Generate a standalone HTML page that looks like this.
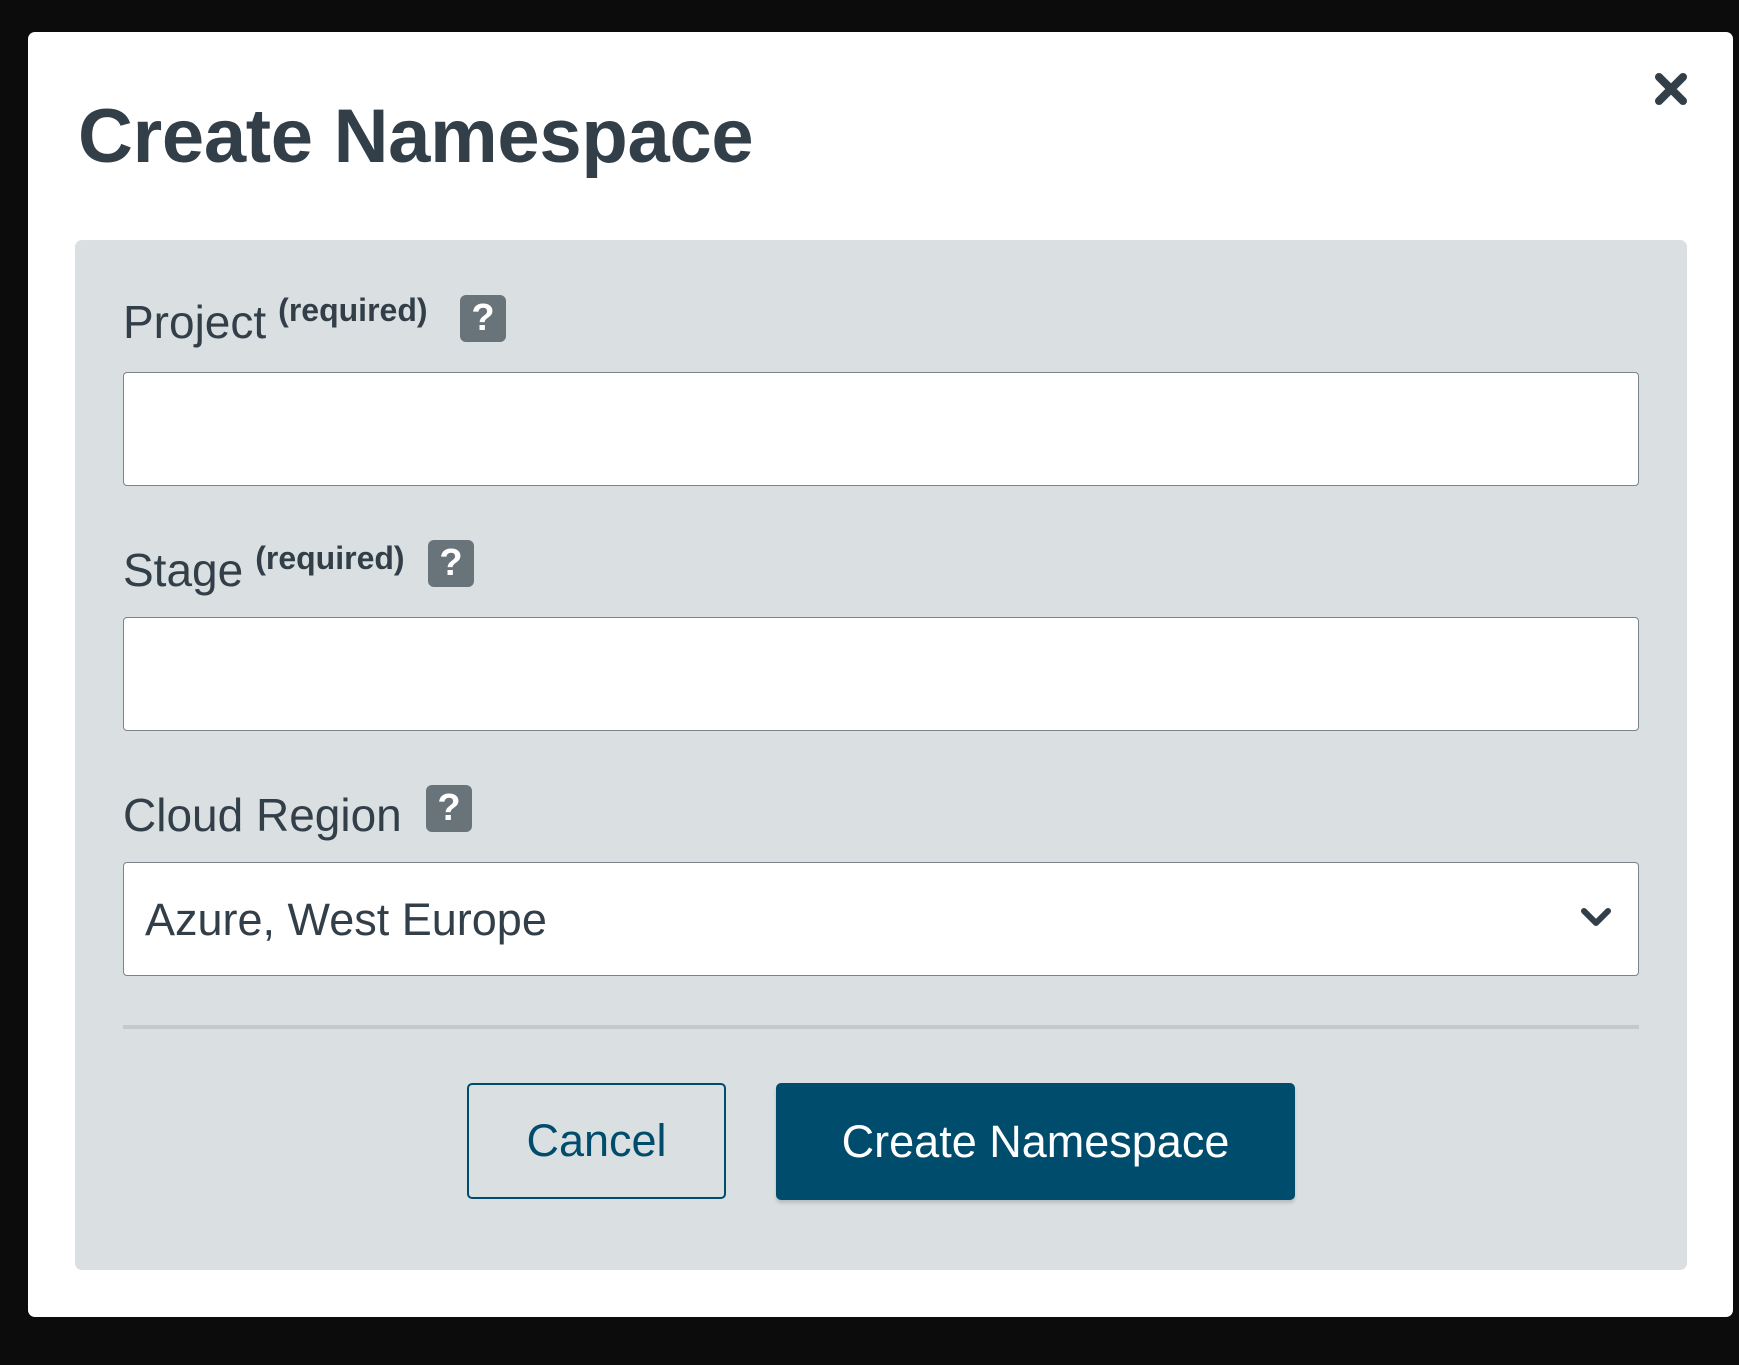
<!DOCTYPE html>
<html><head><meta charset="utf-8"><style>
*{box-sizing:border-box;margin:0;padding:0}
body{width:1739px;height:1365px;background:#0c0c0c;position:relative;overflow:hidden;font-family:"Liberation Sans",sans-serif;color:#333f48}
.modal{position:absolute;left:28px;top:32px;width:1705px;height:1285px;background:#fff;border-radius:7px}
.abs{position:absolute}
h1{position:absolute;left:50px;top:67px;font-size:76px;font-weight:bold;line-height:1;color:#333f48;letter-spacing:-0.3px}
.panel{position:absolute;left:47px;top:208px;width:1612px;height:1030px;background:#dadfe2;border-radius:7px}
.lbl{position:absolute;font-size:46px;line-height:1;white-space:nowrap}
.lbl sup{font-size:32px;font-weight:bold;vertical-align:0;position:relative;top:-17px;margin-left:12px}
.q{position:absolute;width:46px;height:47px;background:#68737a;border-radius:6px;color:#fff;font-weight:bold;font-size:38px;line-height:47px;text-align:center}
.inp{position:absolute;left:48px;width:1516px;height:114px;background:#fff;border:1.5px solid #7b848a;border-radius:4px}
</style></head><body>
<div class="modal">
<h1>Create Namespace</h1>
<svg class="abs" style="left:1626px;top:40px" width="34" height="34" viewBox="0 0 34 34"><path d="M5 5L29 29M29 5L5 29" stroke="#333f48" stroke-width="8" stroke-linecap="round"/></svg>
<div class="panel">
<div class="lbl" style="left:48px;top:59px">Project<sup>(required)</sup></div>
<div class="q" style="left:385px;top:55px">?</div>
<div class="inp" style="top:132px"></div>
<div class="lbl" style="left:48px;top:307px">Stage<sup>(required)</sup></div>
<div class="q" style="left:353px;top:300px">?</div>
<div class="inp" style="top:377px"></div>
<div class="lbl" style="left:48px;top:552px">Cloud Region</div>
<div class="q" style="left:351px;top:545px">?</div>
<div class="inp" style="top:622px"><div class="abs" style="left:21px;top:34px;font-size:45px;color:#333f48;line-height:1">Azure, West Europe</div>
<svg class="abs" style="left:1456px;top:44px" width="32" height="22" viewBox="0 0 32 22"><path d="M4 4L16 16L28 4" fill="none" stroke="#333f48" stroke-width="6" stroke-linecap="round" stroke-linejoin="round"/></svg></div>
<div class="abs" style="left:48px;top:785px;width:1516px;height:4px;background:#c4c9cc"></div>
<div class="abs" style="left:392px;top:843px;width:259px;height:116px;border:2px solid #004c6d;border-radius:5px;color:#004c6d;font-size:45px;text-align:center;line-height:112px">Cancel</div>
<div class="abs" style="left:701px;top:843px;width:519px;height:117px;background:#004c6d;border-radius:5px;color:#fff;font-size:45px;text-align:center;line-height:117px;box-shadow:0 3px 3px rgba(0,0,0,.15)">Create Namespace</div>
</div>
</div>
</body></html>
